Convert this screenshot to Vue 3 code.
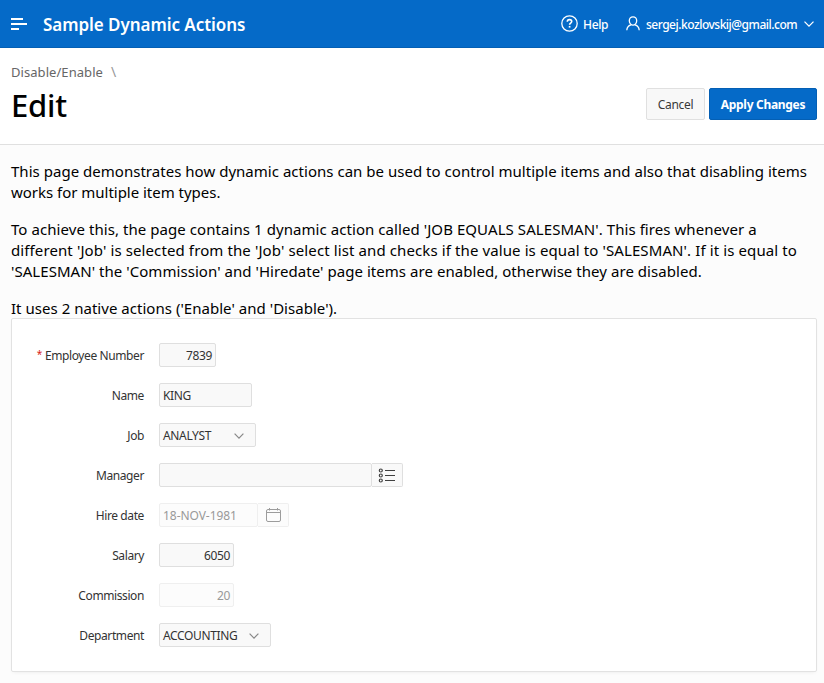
<script setup>
import { ref } from 'vue'

const paragraphs = [
  [
    { text: 'This page demonstrates how dynamic actions can be used to control multiple items and also that disabling items', track: 0.025 },
    { text: 'works for multiple item types.', track: -0.02 },
  ],
  [
    { text: "To achieve this, the page contains 1 dynamic action called 'JOB EQUALS SALESMAN'. This fires whenever a", track: 0.067 },
    { text: "different 'Job' is selected from the 'Job' select list and checks if the value is equal to 'SALESMAN'. If it is equal to", track: 0.108 },
    { text: "'SALESMAN' the 'Commission' and 'Hiredate' page items are enabled, otherwise they are disabled.", track: 0.05 },
  ],
  [{ text: "It uses 2 native actions ('Enable' and 'Disable').", track: 0.03 }],
]

const fields = ref([
  { label: 'Employee Number', value: '7839', kind: 'number', width: 57, required: true },
  { label: 'Name', value: 'KING', kind: 'text', width: 93 },
  { label: 'Job', value: 'ANALYST', kind: 'select', width: 97 },
  { label: 'Manager', value: '', kind: 'list', width: 213 },
  { label: 'Hire date', value: '18-NOV-1981', kind: 'date', width: 99, disabled: true },
  { label: 'Salary', value: '6050', kind: 'number', width: 75 },
  { label: 'Commission', value: '20', kind: 'number', width: 75, disabled: true },
  { label: 'Department', value: 'ACCOUNTING', kind: 'select', width: 112 },
])
</script>

<template>
  <div class="page">
    <header class="topbar">
      <svg class="menu" width="16" height="12" viewBox="0 0 16 12"><path d="M0 1h12M0 6h16M0 11h8" stroke="#fff" stroke-width="2" /></svg>
      <span class="brand">Sample Dynamic Actions</span>
      <nav class="tools">
        <svg width="17" height="17" viewBox="0 0 17 17" fill="none" stroke="#fff">
          <circle cx="8.5" cy="8.5" r="7.7" stroke-width="1.3" />
          <path d="M6.3 6.8C6.3 5.3 7.2 4.6 8.5 4.6s2.2.8 2.2 2c0 1.5-2.1 1.6-2.1 3.1" stroke-width="1.6" />
          <path d="M8.6 10.9v1.7" stroke-width="1.7" />
        </svg>
        <span class="help">Help</span>
        <svg class="user" width="14" height="15" viewBox="0 0 14 15" fill="none" stroke="#fff" stroke-width="1.3">
          <path d="M7 .8c2.3 0 3.700 1.600 3.700 3.900S9 9.200 7 9.200 3.300 7 3.300 4.700 4.700.8 7 .8Z" />
          <path d="M4.900 8.900C2.300 9.700 1 11.200.8 14.300M9.100 8.900c2.600.8 3.900 2.300 4.100 5.400" />
        </svg>
        <span class="email">sergej.kozlovskij@gmail.com</span>
        <svg class="caret" width="10" height="6" viewBox="0 0 10 6" fill="none" stroke="#fff" stroke-width="1.3"><path d="M.5.6 5 5.100 9.500.6" /></svg>
      </nav>
    </header>

    <section class="title-bar">
      <div>
        <div class="crumbs"><span class="crumb">Disable/Enable</span><span class="slash">\</span></div>
        <h1>Edit</h1>
      </div>
      <div class="actions">
        <button class="btn cancel"><span>Cancel</span></button>
        <button class="btn hot"><span>Apply Changes</span></button>
      </div>
    </section>

    <main>
      <p v-for="(lines, i) in paragraphs" :key="i">
        <span v-for="line in lines" :key="line.text" class="line" :style="{ letterSpacing: line.track + 'px' }">{{ line.text }}</span>
      </p>

      <form class="region" @submit.prevent>
        <div v-for="f in fields" :key="f.label" class="row" :class="{ disabled: f.disabled }">
          <label><span v-if="f.required" class="req">*</span>{{ f.label }}</label>
          <div class="control" :class="f.kind" :style="{ width: f.width + 'px' }">
            <span>{{ f.value }}</span>
            <svg v-if="f.kind === 'select'" width="10" height="6" viewBox="0 0 10 6" fill="none" stroke="#888" stroke-width="1.2"><path d="M.6.7 5 5.100 9.400.7" /></svg>
          </div>
          <div v-if="f.kind === 'list'" class="addon">
            <svg width="18" height="15" viewBox="0 0 18 15" fill="none" stroke="#404040">
              <g stroke-width="1.2"><circle cx="2.8" cy="2.5" r="1.5" /><circle cx="2.8" cy="7.5" r="1.5" /><circle cx="2.8" cy="12.500" r="1.5" /></g>
              <path d="M7 2.500h10M7 7.500h10M7 12.500h10" stroke-width="1.2" />
            </svg>
          </div>
          <div v-if="f.kind === 'date'" class="addon">
            <svg width="15" height="14" viewBox="0 0 15 14" fill="none" stroke="#9c9c9c">
              <rect x=".5" y="1.5" width="14" height="12" rx="1.5" /><path d="M1 4.500h13M3.500 0v2.500M11.500 0v2.500" />
            </svg>
          </div>
        </div>
      </form>
    </main>
  </div>
</template>

<style>
body { background: #fcfcfc; }
</style>

<style scoped>
.page {
  height: 683px;
  overflow: hidden;
  background: #fcfcfc;
  color: #000;
  font-family: "Noto Sans", "Open Sans", sans-serif;
}
.topbar {
  box-sizing: border-box;
  height: 48px;
  padding: 0 10px 0 11px;
  display: flex;
  align-items: center;
  background: #056ac8;
  border-bottom: 1px solid #045fb4;
  color: #fff;
  white-space: nowrap;
}
.brand { margin-left: 16px; padding-top: 2px; font-size: 17px; line-height: 24px; font-weight: 600; letter-spacing: -0.05px; }
.tools { margin-left: auto; display: flex; align-items: center; font-size: 12px; line-height: 16px; font-weight: 500; }
.help { margin-left: 5px; width: 25px; padding-top: 2px; letter-spacing: -0.35px; }
.user { margin-left: 18px; }
.email { margin-left: 6px; width: 152px; padding-top: 2px; letter-spacing: -0.5px; }
.caret { margin-left: 6px; }
.title-bar {
  box-sizing: border-box;
  height: 97px;
  padding: 16px 7px 0 11px;
  display: flex;
  justify-content: space-between;
  background: #fff;
  border-bottom: 1px solid #e0e0e0;
}
.crumbs { font-size: 13px; line-height: 16px; color: #666; white-space: nowrap; letter-spacing: 0.06px; }
.slash { margin-left: 8px; font-size: 14px; color: #999; }
h1 { margin: 4px 0 0; font-size: 31px; line-height: 42px; font-weight: 500; letter-spacing: -0.2px; }
.actions { display: flex; gap: 4px; padding-top: 24px; }
.btn {
  box-sizing: border-box;
  height: 32px;
  padding: 2px 0 0;
  border-radius: 2px;
  font: 400 12px/16px "Noto Sans", sans-serif;
  letter-spacing: -0.3px;
  white-space: nowrap;
}
.cancel { width: 59px; background: #f8f8f8; border: 1px solid #e0e0e0; color: #383838; }
.hot { width: 108px; background: #056ac8; border: 1px solid #045fb4; color: #fff; font-weight: 700; }
main { padding: 16px 7px 0 11px; }
p { margin: 0 0 16px; font-size: 15px; line-height: 21px; }
p:last-of-type { margin-bottom: -1px; }
.line { display: block; white-space: nowrap; }
.region {
  box-sizing: border-box;
  height: 354px;
  padding: 16px 0 0;
  background: #fff;
  border: 1px solid #e2e2e2;
  border-radius: 2px;
  box-shadow: 0 2px 4px -2px rgba(0, 0, 0, 0.08);
}
.row { height: 40px; display: flex; align-items: center; font-size: 12px; line-height: 16px; color: #333; white-space: nowrap; }
label { width: 132px; margin-right: 15px; padding-top: 1px; text-align: right; letter-spacing: -0.4px; }
.req { color: #d8211a; margin-right: 3px; font-size: 10px; vertical-align: 2px; line-height: 10px; }
.control {
  box-sizing: border-box;
  height: 24px;
  padding: 1px 3px 0;
  display: flex;
  align-items: center;
  background: #f9f9f9;
  border: 1px solid #dfdfdf;
  border-radius: 2px;
  letter-spacing: -0.35px;
}
.number { justify-content: flex-end; }
.date { letter-spacing: -0.05px; }
.select { justify-content: space-between; padding-right: 11px; }
.addon {
  box-sizing: border-box;
  width: 31px;
  height: 24px;
  display: flex;
  align-items: center;
  justify-content: center;
  background: #f9f9f9;
  border: 1px solid #dfdfdf;
  border-left: 0;
  border-radius: 0 2px 2px 0;
}
.disabled .control, .disabled .addon { background: #fcfcfc; border-color: #efefef; color: #999; }
</style>
